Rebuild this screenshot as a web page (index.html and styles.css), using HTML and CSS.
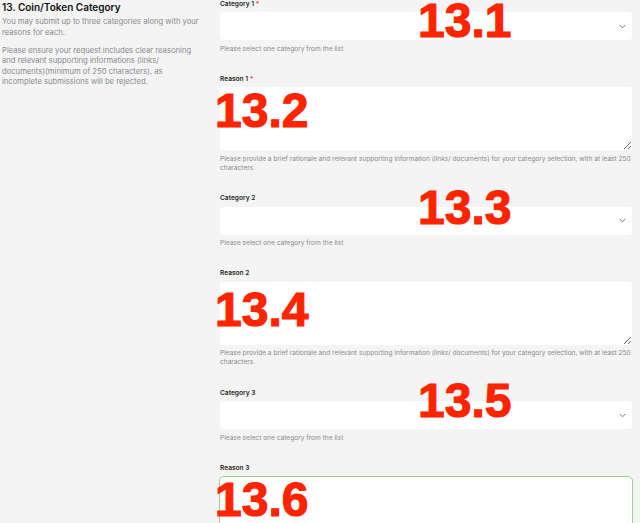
FILE: index.html
```html
<!DOCTYPE html>
<html lang="en">
<head>
<meta charset="utf-8">
<title>Coin/Token Category</title>
<link rel="stylesheet" href="styles.css">
</head>
<body>
<div class="page">
  <aside class="intro">
    <h2 class="intro-title">13. Coin/Token Category</h2>
    <p class="intro-text">You may submit up to three categories along with your reasons for each.</p>
    <p class="intro-text">Please ensure your request includes clear reasoning and relevant supporting informations (links/ documents)(minimum of 250 characters), as incomplete submissions will be rejected.</p>
  </aside>
  <main class="fields">
    <div class="field">
      <label class="label">Category 1 <span class="req">*</span></label>
      <div class="select"><svg class="chev" width="7" height="5" viewBox="0 0 7 5"><polyline points="0.8,1 3.5,3.8 6.2,1" fill="none" stroke="#666" stroke-width="0.9"/></svg></div>
      <p class="help">Please select one category from the list</p>
    </div>
    <div class="field">
      <label class="label">Reason 1 <span class="req">*</span></label>
      <textarea class="area"></textarea>
      <p class="help">Please provide a brief rationale and relevant supporting information (links/ documents) for your category selection, with at least 250 characters.</p>
    </div>
    <div class="field">
      <label class="label">Category 2</label>
      <div class="select"><svg class="chev" width="7" height="5" viewBox="0 0 7 5"><polyline points="0.8,1 3.5,3.8 6.2,1" fill="none" stroke="#666" stroke-width="0.9"/></svg></div>
      <p class="help">Please select one category from the list</p>
    </div>
    <div class="field">
      <label class="label">Reason 2</label>
      <textarea class="area"></textarea>
      <p class="help">Please provide a brief rationale and relevant supporting information (links/ documents) for your category selection, with at least 250 characters.</p>
    </div>
    <div class="field">
      <label class="label">Category 3</label>
      <div class="select"><svg class="chev" width="7" height="5" viewBox="0 0 7 5"><polyline points="0.8,1 3.5,3.8 6.2,1" fill="none" stroke="#666" stroke-width="0.9"/></svg></div>
      <p class="help">Please select one category from the list</p>
    </div>
    <div class="field">
      <label class="label">Reason 3</label>
      <textarea class="area area-focus"></textarea>
    </div>
  </main>
  <span class="tag tag-1">13.1</span>
  <span class="tag tag-2">13.2</span>
  <span class="tag tag-3">13.3</span>
  <span class="tag tag-4">13.4</span>
  <span class="tag tag-5">13.5</span>
  <span class="tag tag-6">13.6</span>
</div>
</body>
</html>
```
FILE: styles.css
```css
html, body {
  margin: 0;
  padding: 0;
  background: #f4f4f5;
  height: 100%;
  overflow: hidden;
}
body {
  font-family: Inter, "Noto Sans", sans-serif;
  color: #1a1a1a;
}
.page {
  position: relative;
  display: flex;
  align-items: flex-start;
  gap: 16px;
  padding: 0 8px 0 2px;
  box-sizing: border-box;
  width: 640px;
}
.intro {
  width: 202px;
  flex: none;
  padding-top: 1px;
}
.intro-title {
  margin: 0 0 3px;
  font-size: 10px;
  line-height: 13px;
  font-weight: 600;
  color: #111;
}
.intro-text {
  margin: 0 0 7.5px;
  font-size: 7.65px;
  line-height: 10.5px;
  color: #8a8a8e;
}
.fields {
  flex: 1 1 0;
  min-width: 0;
  display: flex;
  flex-direction: column;
  gap: 21.3px;
  margin-top: -0.5px;
}
.field {
  display: flex;
  flex-direction: column;
  min-width: 0;
}
.label {
  display: block;
  font-size: 6.6px;
  line-height: 9px;
  font-weight: 600;
  color: #262626;
  margin-bottom: 3.5px;
}
.req {
  color: #e5383b;
}
.select {
  height: 28px;
  background: #fff;
  border-radius: 4px;
  display: flex;
  align-items: center;
  justify-content: flex-end;
  padding-right: 6px;
}
.chev {
  display: block;
}
.area {
  display: block;
  box-sizing: border-box;
  width: 100%;
  height: 63px;
  margin: 0;
  padding: 2px 4px;
  border: none;
  border-radius: 4px;
  background: #fff;
  resize: vertical;
  font: inherit;
  outline: none;
}
.area-focus {
  border: 1px solid #98d38e;
  border-radius: 5px;
  width: calc(100% + 2px);
  margin-left: -1px;
}
.help {
  margin: 4.5px 0 0;
  font-size: 6.6px;
  line-height: 9px;
  color: #8a8a8e;
}
.tag {
  position: absolute;
  font-family: "Liberation Sans", Arial, sans-serif;
  font-weight: 700;
  font-size: 48px;
  line-height: 42px;
  color: #ff2400;
  -webkit-text-stroke: 1.2px #ff2400;
}
.tag-1 { left: 418px; top: 0; }
.tag-2 { left: 215px; top: 90px; }
.tag-3 { left: 418px; top: 187px; }
.tag-4 { left: 215px; top: 289px; }
.tag-5 { left: 418px; top: 380px; }
.tag-6 { left: 215px; top: 479px; }
```
